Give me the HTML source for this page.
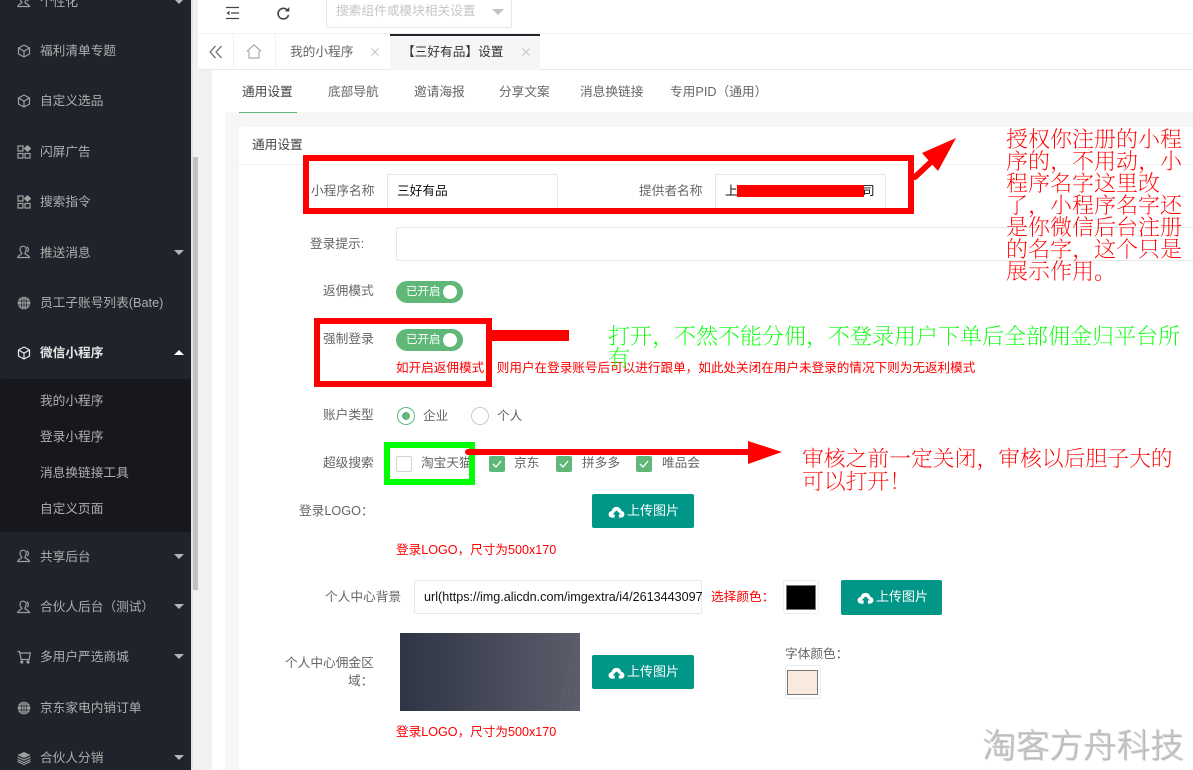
<!DOCTYPE html>
<html lang="zh"><head><meta charset="utf-8"><title>设置</title>
<style>
html,body{margin:0;padding:0;width:1193px;height:770px;overflow:hidden;background:#fff}
body{position:relative;font-family:"Liberation Sans","Noto Sans CJK SC",sans-serif;font-size:12.7px;color:#666}
.a{position:absolute;box-sizing:border-box}
.t{position:absolute;white-space:nowrap;line-height:20px;height:20px;margin-top:1px}
.m{color:#aeaeae;left:40px}
.i{position:absolute;left:17px;width:14px;height:14px;fill:none;stroke:#a0a0a0;stroke-width:1.2}
.c{position:absolute;left:174px;width:0;height:0;border-left:5.5px solid transparent;border-right:5.5px solid transparent;border-top:5.5px solid #b5b5b5}
.r{color:#f00}
.inp{position:absolute;box-sizing:border-box;background:#fff;border:1px solid #e6e6e6;border-radius:2px}
.sw{position:absolute;width:67px;height:22px;border-radius:11px;background:#5fb878}
.sw span{position:absolute;left:10px;top:1px;line-height:20px;font-size:11.5px;color:#fff;white-space:nowrap}
.sw i{position:absolute;left:47px;top:4px;width:14px;height:14px;border-radius:50%;background:#fff}
.ck{position:absolute;top:456px;width:16px;height:16px;border-radius:2px;background:#5fb878}
.ck svg{position:absolute;left:2px;top:2px;width:12px;height:12px;fill:none;stroke:#fff;stroke-width:1.3}
.btn{position:absolute;background:#009688;border-radius:2px;color:#fff}
.btn svg{position:absolute;left:16px;top:11px;width:17px;height:14px;fill:#fff}
.btn span{position:absolute;left:35px;top:7px;line-height:20px;white-space:nowrap;font-size:13px}
.rb{position:absolute;box-sizing:border-box;border:6px solid #f00}
.s{position:absolute;white-space:nowrap;font-family:"Noto Serif CJK SC","Liberation Serif",serif;font-size:22px;line-height:22px;height:22px;font-weight:200}
.x{position:absolute;top:48px;width:8px;height:8px;fill:none;stroke:#c4c4c4;stroke-width:1}
</style></head><body>
<svg width="0" height="0" style="position:absolute">
<symbol id="cube" viewBox="0 0 14 14"><path d="M7 1 12.5 4v6L7 13 1.500 10V4z M1.500 4 7 7.200 12.500 4 M7 7.200V13"/></symbol>
<symbol id="grid" viewBox="0 0 14 14"><path d="M1 1h5v5H1z M1 8.500h5v4.500H1z M8 8.500h5v4.500H8z"/><path d="M10.500 .8 13.500 3.500 10.500 6.200 7.500 3.500z" fill="#a0a0a0"/></symbol>
<symbol id="user" viewBox="0 0 14 14"><path d="M6 1.200c2 0 3.200 1.500 3.200 3.300S8.300 7.500 7.800 8.300c.4 1.300 3.900 1.700 4.700 4.200H.8c.5-2.500 3.900-3 4.200-4.200C4.200 7.500 3 6.300 3 4.500S4 1.200 6 1.200z M9.800 1.800c1.800 1 2 3.800.6 5.400"/></symbol>
<symbol id="globe" viewBox="0 0 14 14"><circle cx="7" cy="7" r="6.300" fill="#a0a0a0" stroke="none"/><path d="M1 5h12M1 9h12M4.700 2v10M7 1v12M9.300 2v10" stroke="#1f232b" stroke-width=".7"/></symbol>
<symbol id="cart" viewBox="0 0 14 14"><path d="M.5 1.500h2l1.600 8h8l1.200-6.500H3"/><circle cx="4.800" cy="12" r="1" fill="#a0a0a0"/><circle cx="11" cy="12" r="1" fill="#a0a0a0"/></symbol>
<symbol id="layers" viewBox="0 0 14 14"><path d="M7 1 13.500 4 7 7 .5 4z" fill="#a0a0a0" stroke="none"/><path d="M.5 6 7 9l6.500-3M.5 8.500 7 11.500l6.500-3M.5 10.500 7 13.500l6.500-3" stroke-width="1.100"/></symbol>
<symbol id="cloud" viewBox="0 0 18 15"><path d="M4.500 13.500C2 13.500.5 12 .5 10c0-1.900 1.400-3.300 3.200-3.500C4.300 3.800 6.300 2 9 2c2.600 0 4.800 1.800 5.300 4.400 2 .2 3.200 1.700 3.200 3.500 0 2-1.500 3.600-3.700 3.600h-2.300V10h2.200L9 5.800 4.800 10H7v3.500z"/></symbol>
</svg>

<!-- sidebar -->
<div class="a" style="left:0;top:0;width:191px;height:770px;background:#1f232b"></div>
<div class="a" style="left:0;top:379px;width:191px;height:153px;background:#16181d;border-radius:3px"></div>
<div class="a" style="left:191px;top:0;width:21px;height:770px;background:#f1f1f1"></div>
<div class="a" style="left:191px;top:0;width:2px;height:770px;background:#e4e4e4"></div>
<div class="a" style="left:193px;top:157px;width:5px;height:433px;background:#c1c1c1"></div>

<svg class="i" style="top:-6px"><use href="#user"/></svg><div class="t m" style="top:-9px">个性化</div><div class="c" style="top:-1px"></div>
<svg class="i" style="top:44px"><use href="#cube"/></svg><div class="t m" style="top:40px">福利清单专题</div>
<svg class="i" style="top:94px"><use href="#cube"/></svg><div class="t m" style="top:90px">自定义选品</div>
<svg class="i" style="top:145px"><use href="#grid"/></svg><div class="t m" style="top:141px">闪屏广告</div>
<svg class="i" style="top:195px"><use href="#grid"/></svg><div class="t m" style="top:191px">搜索指令</div>
<svg class="i" style="top:245px"><use href="#user"/></svg><div class="t m" style="top:242px">推送消息</div><div class="c" style="top:250px"></div>
<svg class="i" style="top:296px"><use href="#globe"/></svg><div class="t m" style="top:292px">员工子账号列表(Bate)</div>
<svg class="i" style="top:346px;stroke:#e8e8e8"><use href="#cube"/></svg><div class="t m" style="top:342px;color:#e4e4e4;font-weight:700">微信小程序</div>
<div class="c" style="top:350px;border-top:0;border-bottom:5.500px solid #fff"></div>
<div class="t m" style="top:390px">我的小程序</div>
<div class="t m" style="top:426px">登录小程序</div>
<div class="t m" style="top:462px">消息换链接工具</div>
<div class="t m" style="top:498px">自定义页面</div>
<svg class="i" style="top:549px"><use href="#user"/></svg><div class="t m" style="top:546px">共享后台</div><div class="c" style="top:554px"></div>
<svg class="i" style="top:600px"><use href="#user"/></svg><div class="t m" style="top:596px">合伙人后台（测试）</div><div class="c" style="top:604px"></div>
<svg class="i" style="top:650px"><use href="#cart"/></svg><div class="t m" style="top:646px">多用户严选商城</div><div class="c" style="top:654px"></div>
<svg class="i" style="top:701px"><use href="#globe"/></svg><div class="t m" style="top:697px">京东家电内销订单</div>
<svg class="i" style="top:751px"><use href="#layers"/></svg><div class="t m" style="top:747px">合伙人分销</div><div class="c" style="top:755px"></div>

<!-- top bar -->
<div class="a" style="left:198px;top:0;width:995px;height:70px;background:#fff;border-bottom:1px solid #e8e8e8"></div>
<div class="a" style="left:198px;top:33px;width:995px;height:1px;background:#f0f0f0"></div>
<svg class="a" style="left:225px;top:6px" width="15" height="14" fill="none" stroke="#444" stroke-width="1.300"><path d="M1 1.500h13M6 7h8M1 12.500h13"/><path d="M1.500 7 4.500 4.800v4.400z" fill="#444" stroke="none"/></svg>
<svg class="a" style="left:276px;top:6px" width="15" height="15" fill="none" stroke="#444" stroke-width="1.600"><path d="M12.500 9a5.300 5.300 0 1 1-1.600-5.300"/><path d="M13.300 1v4.500H8.800z" fill="#444" stroke="none"/></svg>
<div class="inp" style="left:326px;top:-6px;width:186px;height:34px"></div>
<div class="t" style="left:336px;top:0;color:#c6c6c6">搜索组件或模块相关设置</div>
<div class="a" style="left:492px;top:9px;width:0;height:0;border-left:6px solid transparent;border-right:6px solid transparent;border-top:6px solid #c2c2c2"></div>

<svg class="a" style="left:209px;top:45px" width="14" height="14" fill="none" stroke="#777" stroke-width="1.300"><path d="M6.500 1 1 7l5.500 6M12.500 1 7 7l5.500 6"/></svg>
<div class="a" style="left:233px;top:34px;width:1px;height:36px;background:#f0f0f0"></div>
<div class="a" style="left:275px;top:34px;width:1px;height:36px;background:#f0f0f0"></div>
<svg class="a" style="left:246px;top:44px" width="16" height="15" fill="none" stroke="#999" stroke-width="1"><path d="M.8 7.500 8 .8l7.200 6.700M3 7v7h10V7"/></svg>
<div class="t" style="left:290px;top:41px;color:#666">我的小程序</div>
<svg class="x" style="left:371px" viewBox="0 0 8 8"><path d="M.5.500l7 7M7.500.500l-7 7"/></svg>
<div class="a" style="left:390px;top:34px;width:150px;height:36px;background:#f6f6f6;border-top:2px solid #1f232b"></div>
<div class="t" style="left:402px;top:41px;color:#333">【三好有品】设置</div>
<svg class="x" style="left:522px" viewBox="0 0 8 8"><path d="M.5.500l7 7M7.500.500l-7 7"/></svg>

<!-- content bg -->
<div class="a" style="left:212px;top:71px;width:981px;height:699px;background:#fff"></div>
<div class="a" style="left:225px;top:112px;width:968px;height:658px;background:#f6f6f6"></div>
<div class="a" style="left:239px;top:127px;width:954px;height:643px;background:#fff;border-radius:2px 0 0 0"></div>
<div class="a" style="left:239px;top:164px;width:954px;height:1px;background:#f2f2f2"></div>

<div class="t" style="left:242px;top:81px;color:#444">通用设置</div>
<div class="a" style="left:239px;top:112px;width:58px;height:1px;background:#5fb878"></div>
<div class="t" style="left:328px;top:81px">底部导航</div>
<div class="t" style="left:414px;top:81px">邀请海报</div>
<div class="t" style="left:499px;top:81px">分享文案</div>
<div class="t" style="left:580px;top:81px">消息换链接</div>
<div class="t" style="left:670px;top:81px">专用PID（通用）</div>
<div class="t" style="left:252px;top:134px;color:#444">通用设置</div>

<!-- form -->
<div class="t" style="left:311px;top:180px">小程序名称</div>
<div class="inp" style="left:387px;top:174px;width:171px;height:38px"></div>
<div class="t" style="left:397px;top:180px;color:#111">三好有品</div>
<div class="t" style="left:639px;top:180px">提供者名称</div>
<div class="inp" style="left:715px;top:174px;width:171px;height:38px"></div>
<div class="t" style="left:725px;top:180px;color:#111">上</div>
<div class="t" style="left:862px;top:180px;color:#111">司</div>
<div class="a" style="left:737px;top:185px;width:127px;height:12px;background:#f00"></div>

<div class="t" style="left:310px;top:233px">登录提示:</div>
<div class="inp" style="left:396px;top:227px;width:830px;height:34px"></div>

<div class="t" style="left:323px;top:280px">返佣模式</div>
<div class="sw" style="left:396px;top:281px"><span>已开启</span><i></i></div>
<div class="t" style="left:323px;top:328px">强制登录</div>
<div class="sw" style="left:396px;top:329px"><span>已开启</span><i></i></div>
<div class="t r" style="left:396px;top:357px;font-size:12.6px">如开启返佣模式，则用户在登录账号后可以进行跟单，如此处关闭在用户未登录的情况下则为无返利模式</div>

<div class="t" style="left:323px;top:404px">账户类型</div>
<div class="a" style="left:397px;top:407px;width:18px;height:18px;border-radius:50%;border:1px solid #5fb878"></div>
<div class="a" style="left:402px;top:412px;width:8px;height:8px;border-radius:50%;background:#5fb878"></div>
<div class="t" style="left:423px;top:405px">企业</div>
<div class="a" style="left:471px;top:407px;width:18px;height:18px;border-radius:50%;border:1px solid #c9c9c9"></div>
<div class="t" style="left:497px;top:405px">个人</div>

<div class="t" style="left:323px;top:452px">超级搜索</div>
<div class="a" style="left:396px;top:456px;width:16px;height:16px;border-radius:2px;border:1px solid #d2d2d2"></div>
<div class="t" style="left:421px;top:452px">淘宝天猫</div>
<div class="ck" style="left:489px"><svg viewBox="0 0 12 12"><path d="M2 6l3 3 5-6"/></svg></div>
<div class="t" style="left:514px;top:452px">京东</div>
<div class="ck" style="left:556px"><svg viewBox="0 0 12 12"><path d="M2 6l3 3 5-6"/></svg></div>
<div class="t" style="left:582px;top:452px">拼多多</div>
<div class="ck" style="left:636px"><svg viewBox="0 0 12 12"><path d="M2 6l3 3 5-6"/></svg></div>
<div class="t" style="left:662px;top:452px">唯品会</div>

<div class="t" style="left:299px;top:500px">登录LOGO：</div>
<div class="btn" style="left:592px;top:494px;width:102px;height:34px"><svg><use href="#cloud"/></svg><span>上传图片</span></div>
<div class="t r" style="left:396px;top:539px;font-size:12.6px">登录LOGO，尺寸为500x170</div>

<div class="t" style="left:325px;top:586px">个人中心背景</div>
<div class="inp" style="left:414px;top:580px;width:288px;height:34px"></div>
<div class="t" style="left:424px;top:586px;width:278px;overflow:hidden;color:#111;font-size:12.6px">url(https://img.alicdn.com/imgextra/i4/2613443097</div>
<div class="t r" style="left:711px;top:586px">选择颜色：</div>
<div class="inp" style="left:783px;top:580px;width:36px;height:34px;border-color:#eee"></div>
<div class="a" style="left:786px;top:585px;width:30px;height:25px;background:#000;border:1px solid #777"></div>
<div class="btn" style="left:841px;top:580px;width:101px;height:35px"><svg><use href="#cloud"/></svg><span>上传图片</span></div>

<div class="t" style="left:285px;top:652px">个人中心佣金区</div>
<div class="t" style="left:348px;top:670px">域：</div>
<div class="a" style="left:400px;top:633px;width:180px;height:78px;background:linear-gradient(90deg,#2f3545,#5b5d6a);overflow:hidden">
<svg width="180" height="78" fill="none" stroke="#676874" stroke-width=".5" opacity=".7"><path d="M160 78C166 50 172 20 178 0M166 78C170 55 175 30 180 12M172 78C175 60 178 45 180 32M176 78C177 68 179 58 180 50"/></svg></div>
<div class="btn" style="left:592px;top:655px;width:102px;height:34px"><svg><use href="#cloud"/></svg><span>上传图片</span></div>
<div class="t" style="left:785px;top:643px">字体颜色：</div>
<div class="inp" style="left:785px;top:665px;width:36px;height:34px;border-color:#eee"></div>
<div class="a" style="left:787px;top:670px;width:31px;height:25px;background:#faeadd;border:1px solid #777"></div>
<div class="t r" style="left:396px;top:721px;font-size:12.6px">登录LOGO，尺寸为500x170</div>

<!-- annotations -->
<div class="rb" style="left:303px;top:155px;width:611px;height:59px"></div>
<div class="rb" style="left:314px;top:318px;width:178px;height:69px"></div>
<div class="a" style="left:492px;top:330px;width:77px;height:11px;background:#f00"></div>
<div class="rb" style="left:384px;top:442px;width:91px;height:43px;border-color:#0f0"></div>
<svg class="a" style="left:460px;top:130px;overflow:visible" width="500" height="340">
<path d="M455 47 472 31" stroke="#f00" stroke-width="6" stroke-linecap="round"/>
<path d="M496 8 462 23 478 41z" fill="#f00"/>
<path d="M8 322H290" stroke="#f00" stroke-width="6" stroke-linecap="round"/>
<path d="M288 311 322 322 288 334z" fill="#f00"/>
</svg>

<div class="s" style="left:1006px;top:128px;color:#f00">授权你注册的小程</div>
<div class="s" style="left:1006px;top:150px;color:#f00">序的，不用动，小</div>
<div class="s" style="left:1006px;top:172px;color:#f00">程序名字这里改</div>
<div class="s" style="left:1006px;top:194px;color:#f00">了，小程序名字还</div>
<div class="s" style="left:1006px;top:216px;color:#f00">是你微信后台注册</div>
<div class="s" style="left:1006px;top:238px;color:#f00">的名字，这个只是</div>
<div class="s" style="left:1006px;top:260px;color:#f00">展示作用。</div>
<div class="s" style="left:608px;top:325px;color:#0f0">打开，不然不能分佣，不登录用户下单后全部佣金归平台所</div>
<div class="s" style="left:608px;top:347px;color:#0f0">有</div>
<div class="s" style="left:802px;top:447px;color:#f00;font-size:21.800px">审核之前一定关闭，审核以后胆子大的</div>
<div class="s" style="left:802px;top:470px;color:#f00;font-size:21.800px">可以打开！</div>

<div class="t" style="left:982px;top:726px;height:40px;line-height:40px;font-size:33.600px;color:#c8c8c8;font-weight:300;text-shadow:1px 1px 1px #aaa">淘客方舟科技</div>
</body></html>
